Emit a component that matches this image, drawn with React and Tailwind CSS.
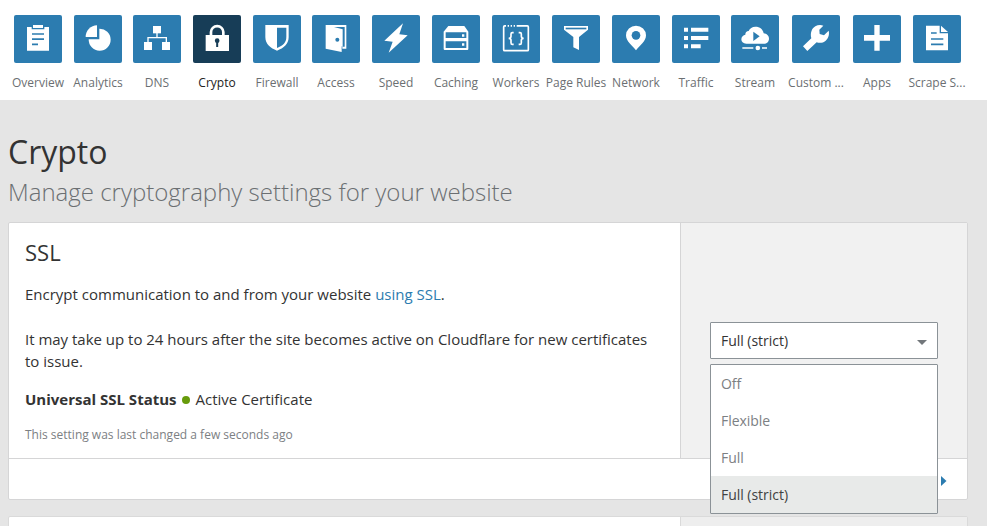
import React from "react";

const B = "#2c7cb0";

const icons = {
  overview: (
    <>
      <path d="M39 36H53V43H91V36H105V107H39Z" />
      <rect x="57" y="30" width="30" height="9" />
      <path d="M54 57H90M54 72.500H90M54 88H72" stroke={B} strokeWidth="5" />
    </>
  ),
  analytics: (
    <>
      <path d="M69 31A35 35 0 0 0 35 66H69Z" />
      <path d="M76 41A33 33 0 1 1 44 73H76Z" />
    </>
  ),
  dns: (
    <>
      <rect x="60" y="33" width="24" height="22" />
      <rect x="33" y="81" width="24" height="24" />
      <rect x="87" y="81" width="24" height="24" />
      <path d="M72 54V68M45 82V68H100V82" fill="none" stroke="#fff" strokeWidth="4" />
    </>
  ),
  crypto: (
    <>
      <rect x="38" y="60" width="70" height="48" />
      <path d="M54 62V51A18.500 17.500 0 0 1 91 51V62" fill="none" stroke="#fff" strokeWidth="8" />
      <circle cx="72.500" cy="77" r="7" fill="#173d57" />
      <rect x="69.500" y="78" width="6" height="18" fill="#173d57" />
    </>
  ),
  firewall: (
    <>
      <path d="M37 30H107V66C107 88 92 99 72 107C52 99 37 88 37 66Z" />
      <path d="M72 38H100V66C100 83 90 92 72 99Z" fill={B} />
    </>
  ),
  access: (
    <>
      <path d="M41 30H103V101H89V111L41 101Z" />
      <path d="M66 36H98V95H92V43Z" fill={B} />
      <path d="M90 94V102" stroke={B} strokeWidth="2" />
      <circle cx="76" cy="74" r="6" fill={B} />
    </>
  ),
  speed: <path d="M93 25L37 77L62 80L50 113L107 61L82 58Z" />,
  caching: (
    <>
      <path d="M49 33H97L109 50V102Q109 105 106 105H38Q35 105 35 102V50Z" />
      <path d="M41 52H103V69H41ZM41 79H103V99H41Z" fill={B} />
      <path d="M90 58H97V65H90ZM90 85H97V92H90Z" />
    </>
  ),
  workers: (
    <g fill="none" stroke="#fff" strokeWidth="5">
      <path d="M42 32.500H38Q35 32.500 35 36V104Q35 107 38 107H106Q109 107 109 104V36Q109 32.500 106 32.500H78" />
      <path d="M47 32.500H51M56 32.500H60M65 32.500H69M74 32.500H78" />
      <path d="M65 53H61Q57 53 57 57V64Q57 70 50 70Q57 70 57 76V83Q57 88 61 88H65M80 53H84Q88 53 88 57V64Q88 70 95 70Q88 70 88 76V83Q88 88 84 88H80" strokeWidth="5" />
    </g>
  ),
  rules: (
    <>
      <path d="M36 33H108V44L81 66V105L64 97V66L36 44Z" />
      <path d="M41 38H103V43H41Z" fill={B} />
    </>
  ),
  network: (
    <>
      <path d="M72 106C61 92 42 79 42 61A30 29 0 0 1 102 61C102 79 83 92 72 106Z" />
      <circle cx="72" cy="61" r="13" fill={B} />
    </>
  ),
  traffic: (
    <path d="M36 38H48V50H36ZM57 38H109V50H57ZM36 63H48V75H36ZM57 63H109V75H57ZM36 88H48V100H36ZM57 88H86V100H57Z" />
  ),
  stream: (
    <>
      <path d="M46 86C36 86 31 80 31 73C31 65 37 60 43 59C43 52 47 48 53 48C56 40 64 35 73 35C87 35 96 43 98 55C107 56 114 62 114 71C114 80 107 86 99 86Z" />
      <path d="M67 50L86 64L67 78Z" fill={B} />
      <circle cx="80.500" cy="99" r="7" />
      <path d="M34 99H67M93 99H108" stroke="#fff" strokeWidth="5" />
    </>
  ),
  custom: (
    <path d="M33 94L58 70C54 55 59 40 70 34C77 30 86 29 94 32L82 44L83 57L96 61L110 47C113 58 109 70 101 77C93 84 83 85 74 82L46 108Z" />
  ),
  apps: <path d="M64 30H80V60H111V77H80V107H64V77H33V60H64Z" />,
  scrape: (
    <>
      <path d="M39 32H80V55H105V106H39Z" />
      <path d="M84 32L105 51H84Z" />
      <path d="M54 54H71M54 72H91M54 88H91" stroke={B} strokeWidth="5" />
    </>
  ),
};

const items = [
  ["overview", "Overview", ""],
  ["analytics", "Analytics", "ml-[12px]"],
  ["dns", "DNS", "ml-[11px]"],
  ["crypto", "Crypto", "ml-[12px]"],
  ["firewall", "Firewall", "ml-[12px]"],
  ["access", "Access", "ml-[11px]"],
  ["speed", "Speed", "ml-[12px]"],
  ["caching", "Caching", "ml-[12px]"],
  ["workers", "Workers", "ml-[12px]"],
  ["rules", "Page Rules", "ml-[12px]"],
  ["network", "Network", "ml-[12px]"],
  ["traffic", "Traffic", "ml-[12px]"],
  ["stream", "Stream", "ml-[11px]"],
  ["custom", "Custom ...", "ml-[13px]"],
  ["apps", "Apps", "ml-[13px]"],
  ["scrape", "Scrape S...", "ml-[12px]"],
];

function NavItem({ icon, label, gap, active }) {
  return (
    <a className={`flex w-12 shrink-0 flex-col items-center ${gap}`}>
      <span className={`block size-12 rounded-[2px] ${active ? "bg-[#173d57]" : "bg-[#2c7cb0]"}`}>
        <svg viewBox="0 0 144 144" className="size-12" fill="#fff">
          {icons[icon]}
        </svg>
      </span>
      <span className={`mt-[11px] text-[12px] leading-[18px] whitespace-nowrap ${active ? "text-[#222]" : "text-[#6b6f72]"}`}>
        {label}
      </span>
    </a>
  );
}

function SslSelect() {
  return (
    <div className="relative mt-[99px] ml-[29px] w-[228px] text-[14px] tracking-[-0.03px]">
      <div className="flex h-[37px] items-center justify-between rounded-[1px] border border-[#8b9297] bg-white pr-[10px] pl-[10px] text-[#333]">
        <span>Full (strict)</span>
        <svg viewBox="0 0 10 5" className="mt-[3px] h-[5px] w-[10px]" fill="#72777b">
          <path d="M0 0H10L5 5Z" />
        </svg>
      </div>
      <ul className="absolute top-[42px] left-0 z-10 h-[150px] w-[228px] rounded-[1px] border border-[#8b9297] bg-white text-[#7c8083]">
        {["Off", "Flexible", "Full"].map((o) => (
          <li key={o} className="flex h-[37px] items-center pl-[10px]">{o}</li>
        ))}
        <li className="flex h-[37px] items-center bg-[#e8eae9] pl-[10px] text-[#404242]">Full (strict)</li>
      </ul>
    </div>
  );
}

export default function App() {
  return (
    <div className="h-[526px] w-[987px] overflow-hidden bg-[#e5e5e5] font-['Open_Sans',sans-serif] text-[#333]">
      <nav className="flex h-[100px] bg-white pt-[15px] pl-[14px]">
        {items.map(([icon, label, gap]) => (
          <NavItem key={icon} icon={icon} label={label} gap={gap} active={icon === "crypto"} />
        ))}
      </nav>
      <main className="pl-2">
        <h1 className="pt-[30px] text-[32px] leading-[44px] font-normal">Crypto</h1>
        <p className="mt-[2px] text-[24px] leading-[32px] font-light text-[#6b6f72]">Manage cryptography settings for your website</p>
        <section className="mt-[14px] flex h-[278px] w-[960px] flex-col rounded-[2px] border border-[#d5d5d6] bg-white">
          <div className="flex h-[236px] border-b border-[#d5d5d6]">
            <div className="w-[671px] shrink-0 pl-4 text-[15px] leading-[22px]">
              <h2 className="pt-[14px] text-[22px] leading-[30px]">SSL</h2>
              <p className="mt-[16px]">Encrypt communication to and from your website <a className="text-[#2c7cb0]">using SSL</a>.</p>
              <p className="mt-[23px] w-[640px] tracking-[-0.01px]">It may take up to 24 hours after the site becomes active on Cloudflare for new certificates to issue.</p>
              <p className="mt-[16px] flex items-center">
                <strong className="font-bold">Universal SSL Status</strong>
                <i className="mt-[2px] mr-[6px] ml-[5px] block size-2 rounded-full bg-[#679b0c]" />
                <span>Active Certificate</span>
              </p>
              <p className="mt-[16px] text-[12px] leading-[18px] text-[#7c8083]">This setting was last changed a few seconds ago</p>
            </div>
            <div className="flex-1 border-l border-[#d5d5d6] bg-[#f1f1f1]">
              <SslSelect />
            </div>
          </div>
          <div className="flex flex-1 items-center justify-end pr-[20px]">
            <svg viewBox="0 0 6 10" className="mt-[4px] h-[10px] w-[6px]" fill={B}>
              <path d="M0 0L5.500 5L0 10Z" />
            </svg>
          </div>
        </section>
        <section className="mt-4 flex h-10 w-[960px] rounded-[2px] border border-[#dadada] bg-white">
          <div className="w-[671px]" />
          <div className="flex-1 border-l border-[#dadada] bg-[#eeeeee]" />
        </section>
      </main>
    </div>
  );
}
